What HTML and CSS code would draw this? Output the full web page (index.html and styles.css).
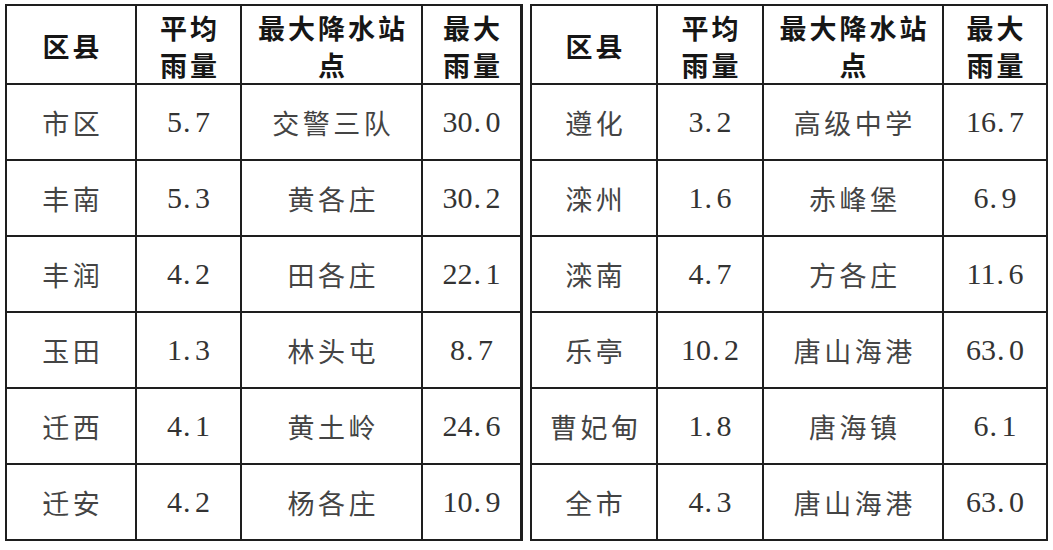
FILE: index.html
```html
<!DOCTYPE html>
<html lang="zh-CN">
<head>
<meta charset="utf-8">
<title>降水统计</title>
<link rel="stylesheet" href="styles.css">
</head>
<body>
<div class="page">
  <div class="tbl tbl-left">
    <div class="cell head">区县</div>
    <div class="cell head">平均<br>雨量</div>
    <div class="cell head">最大降水站<br>点</div>
    <div class="cell head last">最大<br>雨量</div>

    <div class="cell txt">市区</div>
    <div class="cell num">5<span class="dot">.</span>7</div>
    <div class="cell txt">交警三队</div>
    <div class="cell num last">30<span class="dot">.</span>0</div>

    <div class="cell txt">丰南</div>
    <div class="cell num">5<span class="dot">.</span>3</div>
    <div class="cell txt">黄各庄</div>
    <div class="cell num last">30<span class="dot">.</span>2</div>

    <div class="cell txt">丰润</div>
    <div class="cell num">4<span class="dot">.</span>2</div>
    <div class="cell txt">田各庄</div>
    <div class="cell num last">22<span class="dot">.</span>1</div>

    <div class="cell txt">玉田</div>
    <div class="cell num">1<span class="dot">.</span>3</div>
    <div class="cell txt">林头屯</div>
    <div class="cell num last">8<span class="dot">.</span>7</div>

    <div class="cell txt">迁西</div>
    <div class="cell num">4<span class="dot">.</span>1</div>
    <div class="cell txt">黄土岭</div>
    <div class="cell num last">24<span class="dot">.</span>6</div>

    <div class="cell txt">迁安</div>
    <div class="cell num">4<span class="dot">.</span>2</div>
    <div class="cell txt">杨各庄</div>
    <div class="cell num last">10<span class="dot">.</span>9</div>
  </div>

  <div class="tbl tbl-right">
    <div class="cell head">区县</div>
    <div class="cell head">平均<br>雨量</div>
    <div class="cell head">最大降水站<br>点</div>
    <div class="cell head">最大<br>雨量</div>

    <div class="cell txt">遵化</div>
    <div class="cell num">3<span class="dot">.</span>2</div>
    <div class="cell txt">高级中学</div>
    <div class="cell num">16<span class="dot">.</span>7</div>

    <div class="cell txt">滦州</div>
    <div class="cell num">1<span class="dot">.</span>6</div>
    <div class="cell txt">赤峰堡</div>
    <div class="cell num">6<span class="dot">.</span>9</div>

    <div class="cell txt">滦南</div>
    <div class="cell num">4<span class="dot">.</span>7</div>
    <div class="cell txt">方各庄</div>
    <div class="cell num">11<span class="dot">.</span>6</div>

    <div class="cell txt">乐亭</div>
    <div class="cell num">10<span class="dot">.</span>2</div>
    <div class="cell txt">唐山海港</div>
    <div class="cell num">63<span class="dot">.</span>0</div>

    <div class="cell txt">曹妃甸</div>
    <div class="cell num">1<span class="dot">.</span>8</div>
    <div class="cell txt">唐海镇</div>
    <div class="cell num">6<span class="dot">.</span>1</div>

    <div class="cell txt">全市</div>
    <div class="cell num">4<span class="dot">.</span>3</div>
    <div class="cell txt">唐山海港</div>
    <div class="cell num">63<span class="dot">.</span>0</div>
  </div>
</div>
</body>
</html>
```

FILE: styles.css
```css
* {
  box-sizing: border-box;
}

html, body {
  margin: 0;
  padding: 0;
  background: #ffffff;
}

.page {
  display: flex;
  align-items: flex-start;
  gap: 7px;
  padding: 4px 0 0 5px;
}

.tbl {
  display: grid;
  grid-template-rows: 79px repeat(6, 76px);
  border-top: 2px solid #1e1e1e;
  border-left: 2px solid #1e1e1e;
}

.tbl-left {
  grid-template-columns: 130px 105px 181px 100px;
}

.tbl-right {
  grid-template-columns: 126px 106px 180px 104px;
}

.cell {
  display: flex;
  align-items: center;
  justify-content: center;
  text-align: center;
  border-right: 2px solid #1e1e1e;
  border-bottom: 2px solid #1e1e1e;
}

.cell.last {
  border-right-width: 3px;
}

.head {
  font-family: "Noto Sans CJK SC", sans-serif;
  font-weight: 700;
  font-size: 27px;
  line-height: 37px;
  letter-spacing: 3px;
  padding-left: 3px;
  color: #161616;
  padding-top: 2px;
}

.txt {
  font-family: "Noto Sans CJK SC", sans-serif;
  font-weight: 400;
  font-size: 27px;
  letter-spacing: 3.5px;
  padding-left: 3.5px;
  color: #444444;
}

.num {
  font-family: "Liberation Serif", "Times New Roman", serif;
  font-size: 30px;
  letter-spacing: 0;
  color: #333333;
}

.dot {
  display: inline-block;
  width: 13px;
  text-align: left;
  padding-left: 1px;
}
```
